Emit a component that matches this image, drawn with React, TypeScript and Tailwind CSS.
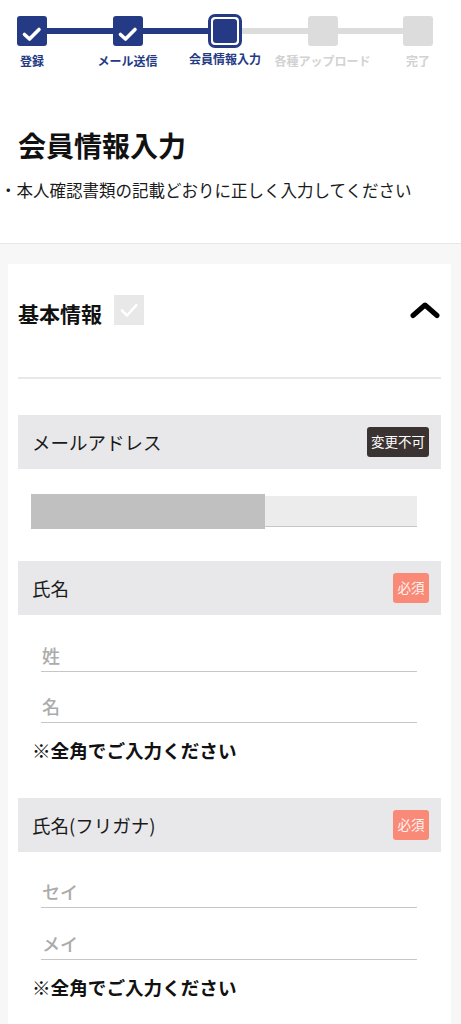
import React from "react";

const NAVY = "bg-[#253a84]";

function CheckBox() {
  return (
    <div className="w-[30px] h-[30px] rounded-[3px] bg-[#253a84] flex items-center justify-center shrink-0">
      <svg width="30" height="30" viewBox="0 0 30 30">
        <path d="M7.5 18.5 L12.5 23 L22 13.5" fill="none" stroke="#fff" strokeWidth="3.6" strokeLinecap="round" strokeLinejoin="round" />
      </svg>
    </div>
  );
}

function Step({ box, label, active }: { box: React.ReactNode; label: string; active: boolean }) {
  return (
    <div className="relative shrink-0 flex items-center justify-center">
      {box}
      <span
        className={`absolute left-1/2 -translate-x-1/2 top-[36px] whitespace-nowrap text-[12px] font-bold leading-[17px] ${active ? "text-[#253a84]" : "text-[#d2d2d2]"}`}
      >
        {label}
      </span>
    </div>
  );
}

function Connector({ on }: { on: boolean }) {
  return <div className={`flex-1 h-[6px] ${on ? NAVY : "bg-[#dcdcdc]"}`} />;
}

function SectionHeader({ title, badge, dark }: { title: string; badge: string; dark?: boolean }) {
  return (
    <div className="h-[54px] bg-[#e8e8ea] flex items-center justify-between pl-[14px] pr-[12px]">
      <span className="text-[18.5px] text-[#1a1a1a] leading-none">{title}</span>
      <span
        className={`h-[30px] flex items-center justify-center rounded-[3px] text-[13.5px] leading-none ${dark ? "bg-[#3b3331] text-white px-[4px]" : "bg-[#fa8a78] text-[#fff4f2] px-[4.5px]"}`}
      >
        {badge}
      </span>
    </div>
  );
}

function UnderlineInput({ placeholder, className = "" }: { placeholder: string; className?: string }) {
  return (
    <div className={`ml-[23px] mr-[24px] h-[33px] border-b-[1.5px] border-[#c6c6c6] flex items-center pl-[1px] ${className}`}>
      <span className="text-[18px] text-[#ababab] leading-none font-medium">{placeholder}</span>
    </div>
  );
}

function Note({ className = "" }: { className?: string }) {
  return (
    <div className={`ml-[14px] text-[18.6px] font-bold leading-[26px] text-[#111] ${className}`}>※全角でご入力ください</div>
  );
}

export default function App() {
  return (
    <div
      className="w-[461px] min-h-[1024px] bg-white overflow-hidden"
      style={{ fontFamily: '"Noto Sans CJK JP", "Noto Sans", sans-serif' }}
    >
      {/* Stepper */}
      <div className="h-[80px] pt-[14px] pl-[17px] pr-[28px]">
        <div className="flex items-center h-[34px]">
          <Step box={<CheckBox />} label="登録" active />
          <Connector on />
          <Step box={<CheckBox />} label="メール送信" active />
          <Connector on />
          <Step
            box={
              <div className="w-[34px] h-[34px] rounded-[7px] border-[3px] border-[#253a84] p-[2px] flex">
                <div className="flex-1 rounded-[3px] bg-[#253a84]" />
              </div>
            }
            label="会員情報入力"
            active
          />
          <Connector on={false} />
          <Step box={<div className="w-[30px] h-[30px] rounded-[3px] bg-[#dcdcdc]" />} label="各種アップロード" active={false} />
          <Connector on={false} />
          <Step box={<div className="w-[30px] h-[30px] rounded-[3px] bg-[#dcdcdc]" />} label="完了" active={false} />
        </div>
      </div>

      {/* Title */}
      <h1 className="mt-[45px] pl-[18px] text-[28px] font-bold leading-[40px] text-[#111]">会員情報入力</h1>
      <p className="mt-[13px] text-[16.5px] leading-[24px] text-[#1a1a1a]">・本人確認書類の記載どおりに正しく入力してください</p>

      {/* Gray area */}
      <div className="mt-[41px] border-t border-[#e6e6e6] bg-[#f7f7f7] pt-[20px] pl-[8px] pr-[10px]">
        <div className="bg-white px-[10px] pb-[40px]">
          <div className="h-[98px] flex items-center justify-between">
            <div className="flex items-center">
              <span className="text-[21px] font-bold text-[#111] leading-none">基本情報</span>
              <div className="ml-[12px] w-[30px] h-[30px] bg-[#e8e8e8] flex items-center justify-center -mt-[6px]">
                <svg width="30" height="30" viewBox="0 0 30 30">
                  <path d="M8 15.5 L13 20.5 L22.5 10" fill="none" stroke="#fff" strokeWidth="2.6" strokeLinecap="round" strokeLinejoin="round" />
                </svg>
              </div>
            </div>
            <svg width="32" height="18" viewBox="0 0 32 18" className="-mt-[6px]">
              <path d="M4 14.5 L16 4 L28 14.5" fill="none" stroke="#000" strokeWidth="5" strokeLinecap="round" strokeLinejoin="round" />
            </svg>
          </div>
          <div className="mt-[15px] h-[2px] bg-[#e8e8e8]" />

          {/* Email */}
          <div className="mt-[36px]">
            <SectionHeader title="メールアドレス" badge="変更不可" dark />
            <div className="mt-[25px] ml-[13px] mr-[24px] h-[35px] relative">
              <div className="absolute left-0 right-0 top-[2px] h-[31px] bg-[#ececec] border-b-[1.5px] border-[#c6c6c6]" />
              <div className="absolute left-0 top-0 w-[234px] h-[35px] bg-[#c0c0c0]" />
            </div>
          </div>

          {/* Name */}
          <div className="mt-[32px]">
            <SectionHeader title="氏名" badge="必須" />
            <UnderlineInput placeholder="姓" className="mt-[24px]" />
            <UnderlineInput placeholder="名" className="mt-[18px]" />
            <Note className="mt-[14px]" />
          </div>

          {/* Furigana */}
          <div className="mt-[35px]">
            <SectionHeader title="氏名(フリガナ)" badge="必須" />
            <UnderlineInput placeholder="セイ" className="mt-[23px]" />
            <UnderlineInput placeholder="メイ" className="mt-[19px]" />
            <Note className="mt-[14px]" />
          </div>
        </div>
      </div>
    </div>
  );
}
